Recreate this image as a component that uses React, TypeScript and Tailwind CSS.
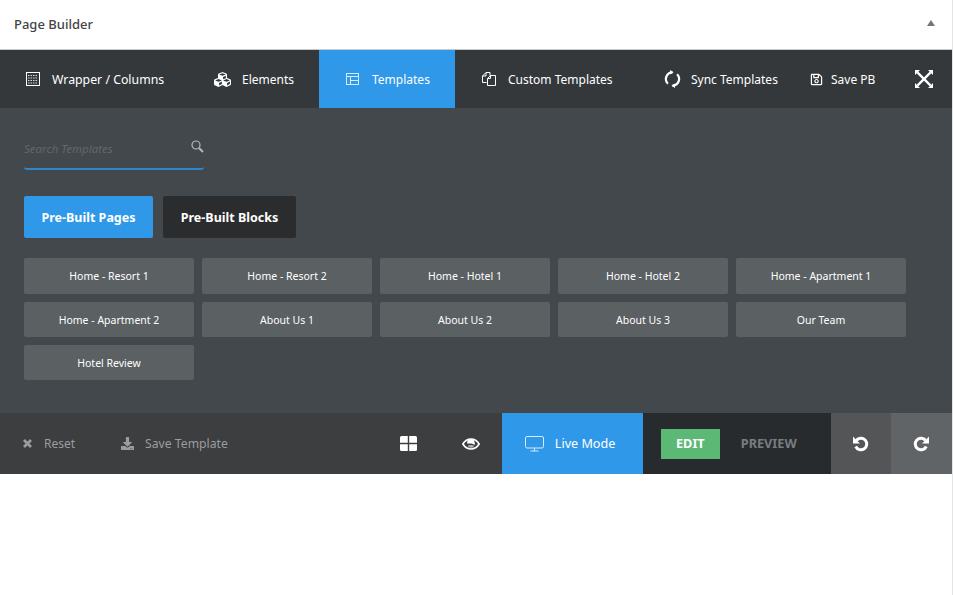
import { FaCubes, FaRegSave, FaDownload } from 'react-icons/fa';

const templates = [
  'Home - Resort 1',
  'Home - Resort 2',
  'Home - Hotel 1',
  'Home - Hotel 2',
  'Home - Apartment 1',
  'Home - Apartment 2',
  'About Us 1',
  'About Us 2',
  'About Us 3',
  'Our Team',
  'Hotel Review',
];

function ColumnsIcon() {
  return (
    <svg width="14" height="14" viewBox="0 0 14 14" fill="none" stroke="currentColor">
      <rect x="0.5" y="0.5" width="13" height="13" />
      <path d="M2 3.5h10M2 6h10M2 8.5h10M2 11h10" strokeDasharray="1.5 1" opacity="0.8" />
    </svg>
  );
}

function TemplatesIcon() {
  return (
    <svg width="14" height="13" viewBox="0 0 14 13" fill="none" stroke="#d5ecfd">
      <rect x="0.5" y="0.5" width="12" height="11" />
      <path d="M0.5 3.5h12M4.5 7.5h8M4.5 3.5v8" />
    </svg>
  );
}

function CopyIcon() {
  return (
    <svg width="14" height="14" viewBox="0 0 14 14" fill="none" stroke="currentColor">
      <path d="M4.5 10.5H.5V4L4 .5h4v3" />
      <path d="M5.5 13.5v-7L8.5 3.5h5v10z" />
      <path d="M4 .5V4H.5M8.5 3.5v3h-3" />
    </svg>
  );
}

function SearchIcon() {
  return (
    <svg width="13" height="13" viewBox="0 0 13 13" fill="none" stroke="#b5b8ba">
      <circle cx="5" cy="5" r="4" strokeWidth="1.2" />
      <path d="M8 8l4 4" strokeWidth="2" />
    </svg>
  );
}

function SyncIcon() {
  return (
    <svg width="17" height="18" viewBox="0 0 17 18" fill="none" stroke="currentColor" strokeWidth="2.2">
      <path d="M8.5 2.4A6.6 6.6 0 0 0 3.9 13.7" />
      <path d="M8.5 15.6A6.6 6.6 0 0 0 13.1 4.3" />
      <path d="M7.5 15.7l3.5-2.3v4.6zM9.5 2.3L6 4.6V0z" fill="currentColor" stroke="none" />
    </svg>
  );
}

function ExpandIcon() {
  return (
    <svg width="18" height="18" viewBox="0 0 18 18" fill="currentColor">
      <path d="M3.2 1.6L16.4 14.8l-1.6 1.6L1.6 3.2z" />
      <path d="M14.8 1.6l1.6 1.6L3.2 16.4l-1.6-1.6z" />
      <path d="M0 0h5L0 5zM18 0v5L13 0zM0 18v-5L5 18zM18 18h-5L18 13z" />
    </svg>
  );
}

function WindowsIcon() {
  return (
    <svg width="17" height="15" viewBox="0 0 17 15" fill="currentColor">
      <path d="M1.5 0h6.3v6.8H0V1.5A1.5 1.5 0 0 1 1.5 0zM9.2 0h6.3A1.5 1.5 0 0 1 17 1.5v5.3H9.2zM0 8.2h7.8V15H1.5A1.5 1.5 0 0 1 0 13.5zM9.2 8.2H17v5.3a1.5 1.5 0 0 1-1.5 1.5H9.2z" />
    </svg>
  );
}

function EyeIcon() {
  return (
    <svg width="18" height="12" viewBox="0 0 18 12" fill="none">
      <path d="M.9 6C3 2.5 6 1 9 1s6 1.5 8.1 5C15 9.5 12 11 9 11S3 9.5.9 6z" stroke="#fff" strokeWidth="1.7" />
      <path d="M5.3 5.7a3.7 3.7 0 0 1 7.2-1.8c.5 1 .5 2.1.3 3.1-2.3-1.4-5.1-1.7-7.5-1.3z" fill="#fff" />
      <path d="M5.7 7.5c2-.7 4.8-.7 6.5.3-.8 1.4-2 2-3.2 2-1.5 0-2.7-1-3.3-2.3z" fill="#fff" opacity="0.6" />
    </svg>
  );
}

function MonitorIcon() {
  return (
    <svg width="19" height="16" viewBox="0 0 19 16" fill="none" stroke="#d5ecfd">
      <rect x="0.5" y="0.5" width="18" height="11.5" rx="1.5" />
      <path d="M9.5 12v3M5.5 15h8" />
    </svg>
  );
}

function UndoIcon({ flip }: { flip?: boolean }) {
  return (
    <svg width="16" height="16" viewBox="0 0 16 16" fill="none" stroke="#fff" strokeWidth="3" className={flip ? '-scale-x-100' : ''}>
      <path d="M3.3 4.5A5.8 5.8 0 1 1 2.7 10.5" />
      <path d="M0 .6v6.9h6.9z" fill="#fff" stroke="none" />
    </svg>
  );
}

export default function App() {
  return (
    <div className="h-[595px] w-[953px] overflow-hidden border-r border-[#e4e4e4] bg-white font-['Noto_Sans',sans-serif]">
      <div className="w-[952px] whitespace-nowrap">
        <div className="flex h-[50px] items-center justify-between border-b border-[#c8c9ca] pl-3.5 pr-[17px]">
          <span className="text-[13px] font-medium text-[#444]">Page Builder</span>
          <span className="mb-1 h-0 w-0 border-x-[4px] border-b-[6px] border-x-transparent border-b-[#72777c]" />
        </div>

        <div className="flex h-[58px] items-center bg-[#35383b] text-xs text-white">
          <div className="flex h-full w-[190px] items-center gap-3 pl-[26px]">
            <ColumnsIcon />
            <span className="pt-0.5 text-[12.3px]">Wrapper / Columns</span>
          </div>
          <div className="flex h-full w-[129px] items-center gap-[11px] pl-6">
            <FaCubes className="text-[17px]" />
            <span className="pt-0.5">Elements</span>
          </div>
          <div className="flex h-full w-[136px] items-center gap-[12px] bg-[#2f98e9] pl-[27px]">
            <TemplatesIcon />
            <span className="pt-0.5">Templates</span>
          </div>
          <div className="flex h-full w-[183px] items-center gap-3 pl-[27px]">
            <CopyIcon />
            <span className="pt-0.5">Custom Templates</span>
          </div>
          <div className="flex h-full w-[172px] items-center gap-[10px] pl-[26px]">
            <SyncIcon />
            <span className="pt-0.5">Sync Templates</span>
          </div>
          <div className="flex h-full w-[105px] items-center gap-2">
            <FaRegSave className="text-[13px]" />
            <span className="pt-0.5">Save PB</span>
          </div>
          <ExpandIcon />
        </div>

        <div className="h-[305px] bg-[#43484c] px-6 pt-[30px]">
          <div className="flex h-8 w-[180px] items-start justify-between rounded-b-[3px] border-b-2 border-[#2f85cc] pt-0.5">
            <span className="text-[11.5px] italic text-[#62676b]">Search Templates</span>
            <SearchIcon />
          </div>
          <div className="mt-[26px] flex gap-2.5 text-[12.5px] font-bold text-white">
            <div className="flex h-[42px] w-[129px] items-center justify-center rounded-[2px] bg-[#2f98e9] pt-0.5">Pre-Built Pages</div>
            <div className="flex h-[42px] w-[133px] items-center justify-center rounded-[2px] bg-[#2b2c2e] pt-0.5">Pre-Built Blocks</div>
          </div>
          <div className="mt-5 grid grid-cols-[repeat(5,170px)] grid-rows-[36px_35px_35px] gap-x-2 gap-y-2">
            {templates.map((t) => (
              <div key={t} className="flex items-center justify-center rounded-[2px] bg-[#5b6063] pt-0.5 text-[10.5px] text-white">
                {t}
              </div>
            ))}
          </div>
        </div>

        <div className="flex h-[61px] items-center bg-[#3d3e40] text-xs text-[#9b9c9d]">
          <div className="flex items-center gap-[11px] pl-[22px]">
            <svg width="11" height="11" viewBox="0 0 11 11" stroke="currentColor" strokeWidth="2.8">
              <path d="M2 2l7 7M9 2l-7 7" />
            </svg>
            <span>Reset</span>
          </div>
          <div className="ml-[46px] flex items-center gap-[11px]">
            <FaDownload className="text-[13px]" />
            <span className="pt-0.5 text-[12.2px]">Save Template</span>
          </div>
          <div className="ml-[172px] text-white">
            <WindowsIcon />
          </div>
          <div className="ml-[45px]">
            <EyeIcon />
          </div>
          <div className="ml-[22px] flex h-full w-[141px] items-center gap-[11px] bg-[#2f98e9] pl-[23px] text-white">
            <MonitorIcon />
            <span className="pt-0.5 text-[12.6px]">Live Mode</span>
          </div>
          <div className="flex h-full w-[188px] items-center bg-[#272b2e] pl-[18px] text-[12.7px] font-bold">
            <div className="flex h-[30px] w-[59px] items-center justify-center bg-[#5cb975] text-white">EDIT</div>
            <span className="ml-[21px] text-[#7a7c7e]">PREVIEW</span>
          </div>
          <div className="flex h-full w-[60px] items-center justify-center bg-[#535557]">
            <UndoIcon />
          </div>
          <div className="flex h-full w-[61px] items-center justify-center bg-[#616466]">
            <UndoIcon flip />
          </div>
        </div>
      </div>
    </div>
  );
}
